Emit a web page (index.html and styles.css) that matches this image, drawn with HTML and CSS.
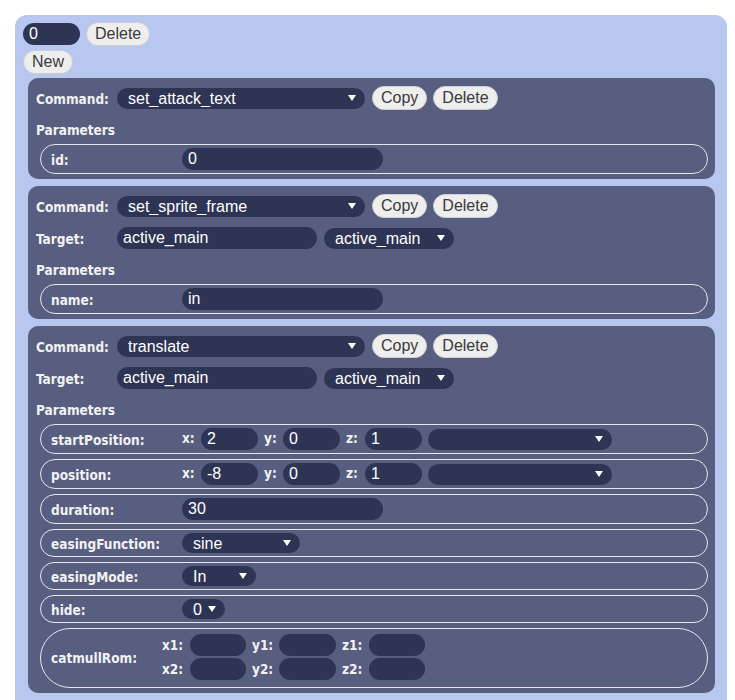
FILE: index.html
```html
<!DOCTYPE html>
<html>
<head>
<meta charset="utf-8">
<link rel="stylesheet" href="styles.css">
</head>
<body>
<div class="panel">
  <div class="toprow">
    <input class="inp w-top" value="0">
    <button class="btn">Delete</button>
  </div>
  <div class="toprow">
    <button class="btn">New</button>
  </div>

  <div class="cmds">
    <div class="cmd">
      <div class="line">
        <span class="lbl">Command:</span>
        <span class="sel w-cmd"><select><option>set_attack_text</option></select></span>
        <button class="btn">Copy</button>
        <button class="btn">Delete</button>
      </div>
      <div class="ptitle">Parameters</div>
      <div class="params">
        <div class="prow"><span class="plabel">id:</span><input class="inp w-long" value="0"></div>
      </div>
    </div>

    <div class="cmd">
      <div class="line">
        <span class="lbl">Command:</span>
        <span class="sel w-cmd"><select><option>set_sprite_frame</option></select></span>
        <button class="btn">Copy</button>
        <button class="btn">Delete</button>
      </div>
      <div class="line">
        <span class="lbl">Target:</span>
        <input class="inp w-target" value="active_main">
        <span class="sel w-tsel"><select><option>active_main</option></select></span>
      </div>
      <div class="ptitle">Parameters</div>
      <div class="params">
        <div class="prow"><span class="plabel">name:</span><input class="inp w-long" value="in"></div>
      </div>
    </div>

    <div class="cmd">
      <div class="line">
        <span class="lbl">Command:</span>
        <span class="sel w-cmd"><select><option>translate</option></select></span>
        <button class="btn">Copy</button>
        <button class="btn">Delete</button>
      </div>
      <div class="line">
        <span class="lbl">Target:</span>
        <input class="inp w-target" value="active_main">
        <span class="sel w-tsel"><select><option>active_main</option></select></span>
      </div>
      <div class="ptitle">Parameters</div>
      <div class="params">
        <div class="prow">
          <span class="plabel">startPosition:</span>
          <div class="vec">
            <span class="vlbl">x:</span><input class="inp w-num" value="2">
            <span class="vlbl">y:</span><input class="inp w-num" value="0">
            <span class="vlbl">z:</span><input class="inp w-num" value="1">
            <span class="sel w-vsel"><select><option></option></select></span>
          </div>
        </div>
        <div class="prow">
          <span class="plabel">position:</span>
          <div class="vec">
            <span class="vlbl">x:</span><input class="inp w-num" value="-8">
            <span class="vlbl">y:</span><input class="inp w-num" value="0">
            <span class="vlbl">z:</span><input class="inp w-num" value="1">
            <span class="sel w-vsel"><select><option></option></select></span>
          </div>
        </div>
        <div class="prow"><span class="plabel">duration:</span><input class="inp w-long" value="30"></div>
        <div class="prow"><span class="plabel">easingFunction:</span><span class="sel sel-sm w-ease"><select><option>sine</option></select></span></div>
        <div class="prow"><span class="plabel">easingMode:</span><span class="sel sel-sm w-mode"><select><option>In</option></select></span></div>
        <div class="prow"><span class="plabel">hide:</span><span class="sel sel-sm w-hide"><select><option>0</option></select></span></div>
        <div class="prow prow-tall">
          <span class="plabel plabel-narrow">catmullRom:</span>
          <div class="cgrid">
            <span class="clbl c1">x1:</span><input class="inp w-num">
            <span class="clbl c2">y1:</span><input class="inp w-num">
            <span class="clbl c3">z1:</span><input class="inp w-num">
            <span class="clbl c1">x2:</span><input class="inp w-num">
            <span class="clbl c2">y2:</span><input class="inp w-num">
            <span class="clbl c3">z2:</span><input class="inp w-num">
          </div>
        </div>
      </div>
    </div>
  </div>
</div>
</body>
</html>
```

FILE: styles.css
```css
html, body {
  margin: 0;
  background: #ffffff;
}
body {
  padding: 15px 8px 0 15px;
  font-family: "Liberation Sans", Arial, sans-serif;
}
.panel {
  background: #b7c7ef;
  border-radius: 12px;
  padding: 7px 12px 8px 8px;
  min-height: 700px;
}
.toprow {
  display: flex;
  align-items: center;
  gap: 6px;
  margin-bottom: 4px;
}
.btn {
  font-family: "Liberation Sans", Arial, sans-serif;
  font-size: 16px;
  color: #3a3a3a;
  background: #eeeeee;
  border: 1px solid #cfcfcf;
  border-radius: 12px;
  height: 24px;
  padding: 0 8px;
  line-height: 20px;
  margin: 0;
}
.inp {
  font-family: "Liberation Sans", Arial, sans-serif;
  font-size: 16px;
  color: #ffffff;
  background: #2e3453;
  border: none;
  border-radius: 11px;
  height: 22px;
  box-sizing: border-box;
  padding: 0 6px;
  margin: 0;
  outline: none;
}
.w-top { width: 57px; }
.w-long { width: 201px; }
.w-target { width: 200px; }
.w-num { width: 57px; }

.sel {
  position: relative;
  display: inline-block;
  height: 21px;
}
.sel select {
  appearance: none;
  -webkit-appearance: none;
  width: 100%;
  height: 100%;
  font-family: "Liberation Sans", Arial, sans-serif;
  font-size: 16px;
  color: #ffffff;
  background: #2e3453;
  border: none;
  border-radius: 11px;
  padding: 0 20px 0 11px;
  margin: 0;
  outline: none;
  display: block;
}
.sel-sm { height: 20px; }
.sel::after {
  content: "";
  position: absolute;
  right: 9px;
  top: 50%;
  margin-top: -3px;
  border-left: 4px solid transparent;
  border-right: 4px solid transparent;
  border-top: 6px solid #ffffff;
  pointer-events: none;
}
.w-cmd { width: 248px; }
.w-tsel { width: 130px; }
.w-vsel { width: 184px; }
.w-ease { width: 118px; }
.w-mode { width: 74px; }
.w-hide { width: 43px; }

.cmds {
  margin-left: 5px;
  display: flex;
  flex-direction: column;
  gap: 7px;
}
.cmd {
  background: #575e80;
  border-radius: 10px;
  padding: 8px 7px 5px 8px;
  display: flex;
  flex-direction: column;
  gap: 8px;
}
.line {
  display: flex;
  align-items: center;
  height: 24px;
}
.lbl, .ptitle, .plabel, .vlbl, .clbl {
  font-family: "DejaVu Sans Condensed", "DejaVu Sans", sans-serif;
  font-weight: bold;
  font-size: 13.5px;
  color: #f2f2f2;
}
.lbl {
  width: 81px;
  padding-top: 2px;
}
.line .btn { margin-left: 6px; }
.line .sel + .btn { margin-left: 7px; }
.line .inp + .sel { margin-left: 7px; }
.ptitle {
  height: 22px;
  line-height: 24px;
}
.params {
  margin-top: -4px;
  margin-left: 4px;
  display: flex;
  flex-direction: column;
  gap: 5px;
}
.prow {
  display: flex;
  align-items: center;
  border: 1px solid #e8e8ee;
  border-radius: 999px;
  padding: 3px 0 3px 10px;
}
.plabel {
  width: 131px;
  flex: none;
  line-height: 16px;
  padding-top: 2px;
}
.plabel-narrow { width: 111px; }
.vec {
  display: flex;
  align-items: center;
}
.vlbl {
  width: 19px;
  line-height: 16px;
  margin-top: -3px;
}
.vec .inp { margin-right: 6px; }
.prow-tall {
  padding-top: 5px;
  padding-bottom: 7px;
}
.cgrid {
  display: grid;
  grid-template-columns: 28px 56px 6px 27px 57px 6px 27px 56px;
  grid-auto-rows: 22px;
  row-gap: 2px;
  align-items: center;
}
.cgrid .inp { width: 100%; }
.cgrid .c1 { grid-column: 1; }
.cgrid .c2 { grid-column: 4; }
.cgrid .c3 { grid-column: 7; }
.clbl { line-height: 16px; }
```
